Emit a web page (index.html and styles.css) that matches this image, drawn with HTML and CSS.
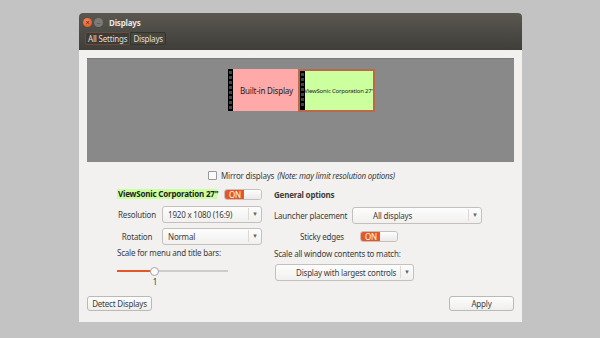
FILE: index.html
```html
<!DOCTYPE html>
<html>
<head>
    <meta charset="UTF-8">
    <title>Displays</title>
    <link rel="stylesheet" href="styles.css">
</head>
<body>
<div class="win">
    <div class="titlebar">
        <div class="title-row">
            <span class="wbtn close">&#215;</span>
            <span class="wbtn mini">&#8211;</span>
            <span class="title">Displays</span>
        </div>
        <div class="crumbs">
            <span class="crumb first">All Settings</span><span class="crumb">Displays</span>
        </div>
    </div>
    <div class="content">
        <div class="canvas">
            <div class="mon builtin"><div class="strip"><i></i></div><div class="face">Built-in Display</div></div>
            <div class="mon viewsonic"><div class="strip"><i></i></div><div class="face"><span>ViewSonic Corporation 27"</span></div></div>
        </div>
        <div class="mirror"><span class="check"></span>Mirror displays <em>(Note: may limit resolution options)</em></div>
        <div class="cols">
            <div class="col left">
                <div class="head-row">
                    <span class="monname">ViewSonic Corporation 27"</span>
                    <span class="switch"><span class="on">ON</span><span class="knob"></span></span>
                </div>
                <div class="row r1">
                    <span class="lab">Resolution</span>
                    <span class="combo w100"><span class="val">1920 x 1080 (16:9)</span><span class="arr">&#9662;</span></span>
                </div>
                <div class="row r2">
                    <span class="lab">Rotation</span>
                    <span class="combo w100"><span class="val">Normal</span><span class="arr">&#9662;</span></span>
                </div>
                <div class="plain s1">Scale for menu and title bars:</div>
                <div class="slider"><span class="fill"></span><span class="thumb"></span></div>
                <div class="tick">1</div>
            </div>
            <div class="col right">
                <div class="bold g1">General options</div>
                <div class="row r1">
                    <span class="lab2">Launcher placement</span>
                    <span class="combo w130 pad"><span class="val">All displays</span><span class="arr">&#9662;</span></span>
                </div>
                <div class="row r2">
                    <span class="lab2">Sticky edges</span>
                    <span class="switch small"><span class="on">ON</span><span class="knob"></span></span>
                </div>
                <div class="plain s2">Scale all window contents to match:</div>
                <div class="row r3">
                    <span class="combo w139 pad"><span class="val">Display with largest controls</span><span class="arr">&#9662;</span></span>
                </div>
            </div>
        </div>
        <div class="buttons">
            <span class="btn">Detect Displays</span>
            <span class="btn">Apply</span>
        </div>
    </div>
</div>
</body>
</html>
```

FILE: styles.css
```css
body{margin:0;background:#c3c3c3;font-family:"Noto Sans","DejaVu Sans",sans-serif;font-size:8px;letter-spacing:-0.2px;color:#3c3c3c;white-space:nowrap;}
.win{margin:13px 0 0 79px;width:443px;height:309px;background:#f2f1f0;border-radius:4px 4px 0 0;overflow:hidden;}
.titlebar{height:37px;background:linear-gradient(#5a5750,#3f3e39);box-sizing:border-box;padding:2px 0 0 2px;}
.title-row{display:flex;align-items:center;height:14px;}
.wbtn{width:9px;height:9px;border-radius:50%;margin-left:2px;font-size:7px;line-height:9px;text-align:center;color:#8a3010;font-weight:bold;letter-spacing:0;}
.close{background:radial-gradient(circle at 40% 35%,#f58a5c,#df4a16);margin-left:2px;}
.mini{background:#7b7a74;color:#5a5953;}
.title{color:#e8e6e2;font-weight:bold;margin-left:6px;}
.crumbs{display:flex;margin:3px 0 0 4px;height:13px;}
.crumb{border:1px solid #35342f;background:#47463f;color:#e1ded8;padding:0 2px;line-height:11px;border-radius:0 2px 2px 0;}
.crumb.first{border-color:#6d4a3a;border-radius:2px 0 0 2px;background:#3c3b36;}
.content{padding:8px 8px 0 8px;}
.canvas{position:relative;height:104px;background:#898989;border-top:1px solid #7a7a7a;box-sizing:border-box;}
.mon{position:absolute;display:flex;height:42px;}
.builtin{left:141px;top:10px;width:72px;}
.viewsonic{left:211px;top:10px;width:73px;height:39px;border:2px solid #b9694a;}
.strip{width:5px;background:#000;display:flex;flex:none;}
.strip i{flex:1;margin:2px 1px;background:repeating-linear-gradient(#444 0 3px,#000 3px 5px);}
.face{flex:1;display:flex;align-items:center;justify-content:center;color:#222;overflow:hidden;}
.builtin .face{background:#ffa9a9;}
.viewsonic .face{background:#ccff9e;font-size:6px;letter-spacing:-0.2px;}
.viewsonic .face span{flex:none;}
.mirror{display:flex;align-items:center;height:12px;margin:7px 0 0 121px;}
.mirror em{margin-left:3px;}
.check{width:7px;height:7px;border:1px solid #999;border-radius:1px;background:#fafafa;margin-right:4px;}
.cols{display:flex;margin:7px 0 0 30px;height:100px;}
.col{display:flex;flex-direction:column;}
.left{width:157px;}
.head-row{display:flex;align-items:center;height:12px;}
.monname{background:#ccff9e;font-weight:bold;color:#222;padding:0 1px;width:98px;line-height:10px;}
.switch{display:flex;margin-left:7px;width:38px;height:11px;border-radius:3px;overflow:hidden;border:1px solid #c9bfb8;box-sizing:border-box;}
.switch .on{width:19px;background:#e4572a;color:#fff;line-height:9px;padding-left:4px;box-sizing:border-box;}
.switch .knob{flex:1;background:linear-gradient(#fdfdfd,#eaeaea);}
.switch.small{margin-left:8px;height:11px;}
.row{display:flex;align-items:center;height:18px;}
.r1{margin-top:5px;}
.r2{margin-top:4px;}
.lab{width:40px;text-align:center;margin-right:5px;}
.lab2{width:70px;text-align:right;margin-right:8px;}
.combo{display:flex;align-items:center;height:17px;border:1px solid #c4c1bd;border-radius:3px;background:linear-gradient(#fdfdfd,#f1f0ef);box-sizing:border-box;}
.combo .val{flex:1;padding-left:5px;}
.combo.pad .val{padding-left:20px;}
.combo .arr{width:12px;border-left:1px solid #dddad6;text-align:center;font-size:7px;color:#666;line-height:12px;}
.w100{width:100px;}
.w130{width:130px;}
.w139{width:139px;margin-left:1px;}
.plain{height:12px;line-height:12px;}
.s1{margin-top:2px;}
.slider{position:relative;width:111px;height:12px;margin-top:6px;background:linear-gradient(#ccc,#ccc) 0 5px/100% 2px no-repeat;}
.slider .fill{position:absolute;left:0;top:5px;width:37px;height:2px;background:#e4572a;}
.slider .thumb{position:absolute;left:33px;top:2px;width:7px;height:7px;border:1px solid #a9a6a2;border-radius:50%;background:#fbfbfb;}
.tick{width:76px;text-align:center;margin-top:-1px;}
.bold{font-weight:bold;}
.g1{height:12px;line-height:12px;margin-top:1px;}
.right .r2{height:12px;margin-top:6px;}
.s2{margin-top:6px;}
.r3{margin-top:3px;}
.buttons{display:flex;justify-content:space-between;margin-top:8px;}
.btn{height:15px;width:65px;border:1px solid #bcb9b4;border-radius:3px;background:linear-gradient(#fdfdfd,#efeeec);display:flex;align-items:center;justify-content:center;box-sizing:border-box;}
```
